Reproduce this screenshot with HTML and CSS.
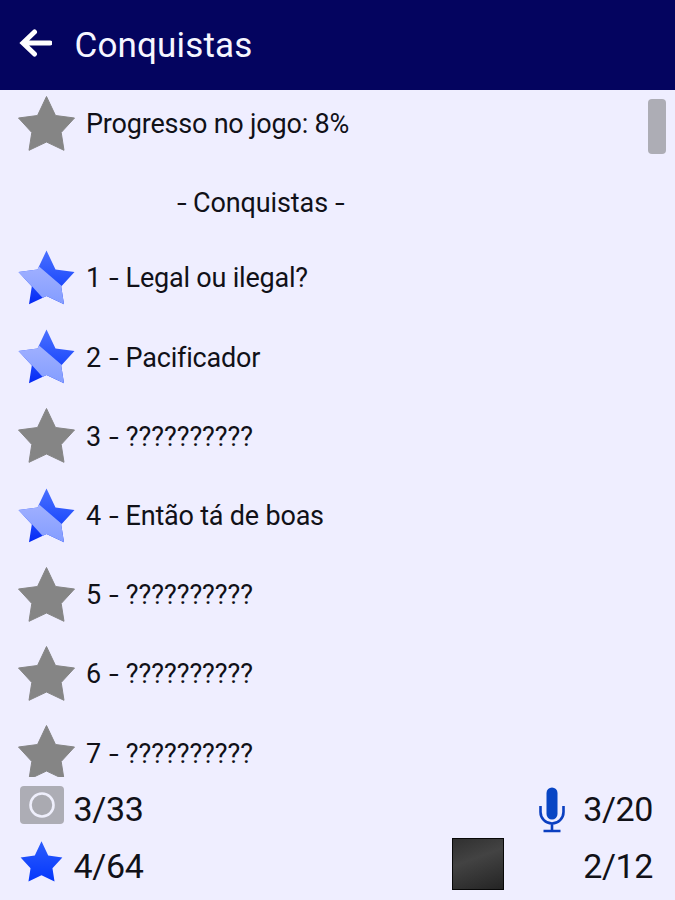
FILE: index.html
```html
<!DOCTYPE html>
<html lang="pt">
<head>
<meta charset="utf-8">
<title>Conquistas</title>
<link rel="stylesheet" href="styles.css">
</head>
<body>
<svg class="defs" width="0" height="0" aria-hidden="true">
  <defs>
    <linearGradient id="blue" x1="0" y1="0" x2="0" y2="1">
      <stop offset="0" stop-color="#4a70ff"/><stop offset=".55" stop-color="#2450fc"/><stop offset="1" stop-color="#0428f4"/>
    </linearGradient>
    <linearGradient id="small" x1="0" y1="0" x2="0" y2="1">
      <stop offset="0" stop-color="#2c5cfc"/><stop offset="1" stop-color="#0437fc"/>
    </linearGradient>
    <linearGradient id="band" x1="0" y1="0" x2="0" y2="1">
      <stop offset="0" stop-color="#a0b0ff"/><stop offset="1" stop-color="#7f9aff"/>
    </linearGradient>
    <path id="star-shape" d="M28.5 .5 37.5 19.5 56.5 22 43.2 36.5 46 54.3 28.5 46 11 54.3 13.8 36.5 .5 22 19.5 19.5Z"/>
    <clipPath id="star-clip"><use href="#star-shape"/></clipPath>
    <symbol id="star-gray" viewBox="0 0 57 55"><use href="#star-shape" fill="#858585" stroke="#858585" stroke-linejoin="round"/></symbol>
    <symbol id="star-won" viewBox="0 0 57 55">
      <use href="#star-shape" fill="url(#blue)"/>
      <path clip-path="url(#star-clip)" fill="url(#band)" d="M0 16H20.5L45 37.1 57 60H35L24.7 48 14.2 36.4 0 26Z"/>
    </symbol>
    <symbol id="star-blue" viewBox="0 0 57 55"><use href="#star-shape" fill="url(#small)"/></symbol>
  </defs>
</svg>
<header class="bar">
  <svg class="back" viewBox="0 0 33 28"><path d="M15.5 3 4 14l11.5 11M4.5 14H31" fill="none" stroke="#fff" stroke-width="5" stroke-linecap="round"/></svg>
  <h1 class="title">Conquistas</h1>
</header>
<main class="list">
  <div class="rows">
    <div class="row first"><svg class="star"><use href="#star-gray"/></svg><span class="name">Progresso no jogo: 8%</span></div>
    <h2 class="section"><span class="dash">-</span> Conquistas <span class="dash">-</span></h2>
    <div class="row"><svg class="star"><use href="#star-won"/></svg><span class="name">1 <span class="dash">-</span> Legal ou ilegal?</span></div>
    <div class="row"><svg class="star"><use href="#star-won"/></svg><span class="name">2 <span class="dash">-</span> Pacificador</span></div>
    <div class="row"><svg class="star"><use href="#star-gray"/></svg><span class="name hidden">3 <span class="dash">-</span> ??????????</span></div>
    <div class="row"><svg class="star"><use href="#star-won"/></svg><span class="name">4 <span class="dash">-</span> Então tá de boas</span></div>
    <div class="row"><svg class="star"><use href="#star-gray"/></svg><span class="name hidden">5 <span class="dash">-</span> ??????????</span></div>
    <div class="row"><svg class="star"><use href="#star-gray"/></svg><span class="name hidden">6 <span class="dash">-</span> ??????????</span></div>
    <div class="row"><svg class="star"><use href="#star-gray"/></svg><span class="name hidden">7 <span class="dash">-</span> ??????????</span></div>
  </div>
  <div class="thumb"></div>
</main>
<footer class="totals">
  <div class="total">
    <svg class="camera" viewBox="0 0 44 38"><rect width="44" height="38" rx="4" fill="#adadb5"/><circle cx="22" cy="19" r="11.5" fill="#aaaab1" stroke="#efeffc" stroke-width="2.6"/></svg>
    <span class="count">3/33</span>
    <svg class="mic" viewBox="0 0 26 46"><rect x="7.5" y=".5" width="11" height="32" rx="5.5" fill="#0845c4"/><path d="M1.5 19v6a11.5 11.5 0 0 0 23 0v-6M13 36.5v8M4.5 44H21.5" fill="none" stroke="#0b3fc0" stroke-width="2.6"/></svg>
    <span class="count right">3/20</span>
  </div>
  <div class="total">
    <svg class="small-star"><use href="#star-blue"/></svg>
    <span class="count">4/64</span>
    <div class="tile"></div>
    <span class="count right">2/12</span>
  </div>
</footer>
</body>
</html>
```

FILE: styles.css
```css
body {
  margin: 0;
  height: 900px;
  overflow: hidden;
  display: flex;
  flex-direction: column;
  background: #efeeff;
  color: #111118;
  font-family: Roboto, sans-serif;
}
.defs { position: absolute; }
.bar {
  height: 90px;
  flex: none;
  box-sizing: border-box;
  padding-left: 18.5px;
  display: flex;
  align-items: center;
  background: #04045f;
  color: #f6f6ff;
}
.back { width: 33px; height: 28px; margin-top: -4px; }
.title {
  margin: 2px 0 0 23px;
  font-size: 35px;
  font-weight: 400;
  line-height: 40px;
  letter-spacing: .15px;
}
.list {
  height: 687px;
  flex: none;
  display: flex;
  justify-content: space-between;
  overflow: hidden;
}
.rows { width: 521px; }
.row {
  display: flex;
  align-items: flex-start;
  height: 79.2px;
  padding-left: 18px;
  font-size: 27px;
  line-height: 32px;
  white-space: nowrap;
}
.first { padding-top: 5.6px; }
.star { width: 57px; height: 55px; flex: none; }
.name { margin: 12.4px 0 0 11px; letter-spacing: -.2px; }
.hidden { letter-spacing: -.05px; }
.dash {
  display: inline-block;
  margin: 0 1.8px 0 2.5px;
  transform: scaleX(1.3);
}
.hidden .dash { margin-right: 1.5px; }
.section {
  margin: 0;
  height: 75.3px;
  font-size: 27px;
  font-weight: 400;
  line-height: 57px;
  text-align: center;
  letter-spacing: -.1px;
}
.section .dash { margin: 0 1px; }
.thumb {
  width: 18px;
  height: 55px;
  margin: 9px 9px 0 0;
  border-radius: 4px;
  background: #adadb5;
}
.totals { padding: 4px 22px 0 20px; }
.total {
  display: flex;
  align-items: center;
  height: 57px;
  font-size: 34px;
  line-height: 40px;
  letter-spacing: -.4px;
}
.camera { width: 44px; height: 38px; margin-top: -9px; }
.small-star { width: 43px; height: 41px; margin: -10px 1px 0 0; }
.count { width: 72px; margin: -2px 0 0 9.6px; }
.mic { width: 26px; height: 46px; margin-left: auto; }
.right { margin-left: 16px; text-align: right; }
.tile {
  width: 52px;
  height: 52px;
  box-sizing: border-box;
  border: 1.5px solid #080808;
  margin: -5px 77px 0 auto;
  background: linear-gradient(160deg, #303030, #434343 40%, #242424);
}
.tile + .right { margin-left: 0; }
```
